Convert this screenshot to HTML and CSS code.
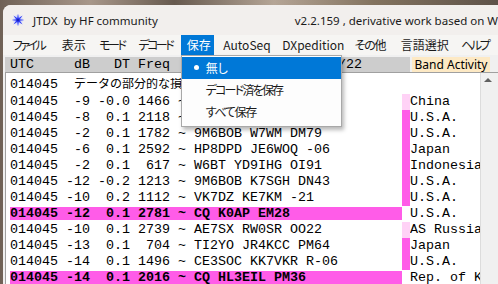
FILE: index.html
```html
<!doctype html>
<html lang="ja">
<head>
    <meta charset="UTF-8">
    <meta name="viewport" content="width=device-width, initial-scale=1.0">
    <link rel="stylesheet" href="styles.css">
    <title>JTDX</title>
</head>
<body>
<div class="window">
    <header class="titlebar">
        <svg class="app-icon" width="14" height="14" viewBox="0 0 14 14">
            <circle cx="7" cy="7" r="5" fill="#c8d0ff" opacity="0.6"/>
            <polygon fill="#2f3cf5" points="7,0.5 7.8,5.1 11.6,2.4 8.9,6.2 13.5,7 8.9,7.8 11.6,11.6 7.8,8.9 7,13.5 6.2,8.9 2.4,11.6 5.1,7.8 0.5,7 5.1,6.2 2.4,2.4 6.2,5.1"/>
            <circle cx="7" cy="7" r="1.3" fill="#1b22b8"/>
        </svg>
        <span class="app-name">JTDX  by HF community</span>
        <span class="app-version">v2.2.159 , derivative work based on WSJT-X by K1JT</span>
    </header>

    <nav class="menubar">
        <span class="menu kana">ファイル</span>
        <span class="menu">表示</span>
        <span class="menu kana">モード</span>
        <span class="menu kana">デコード</span>
        <span class="menu open">保存
            <ul class="dropdown">
                <li class="checked">無し</li>
                <li class="kana">デコード済を保存</li>
                <li class="tight">すべて保存</li>
            </ul>
        </span>
        <span class="menu">AutoSeq</span>
        <span class="menu">DXpedition</span>
        <span class="menu tight">その他</span>
        <span class="menu">言語選択</span>
        <span class="menu kana">ヘルプ</span>
    </nav>

    <section class="band">
        <div class="band-head">
            <div class="columns">UTC     dB   DT Freq    Message   2022/12/22</div>
            <div class="band-title">Band Activity</div>
        </div>
        <div class="band-body">
            <div class="lines">
                <div class="line first"><span class="msg">014045  <span class="note">データの部分的な損失を検出しました</span></span><span class="mark"></span><span class="country"></span></div>
                <div class="line"><span class="msg">014045  -9 -0.0 1466 ~ BD7MQB JA1ABC</span><span class="mark light"></span><span class="country">China</span></div>
                <div class="line"><span class="msg">014045  -8  0.1 2118 ~ W5ABC JH1XYZ</span><span class="mark"></span><span class="country">U.S.A.</span></div>
                <div class="line"><span class="msg">014045  -2  0.1 1782 ~ 9M6BOB W7WM DM79</span><span class="mark"></span><span class="country">U.S.A.</span></div>
                <div class="line"><span class="msg">014045  -6  0.1 2592 ~ HP8DPD JE6WOQ -06</span><span class="mark"></span><span class="country">Japan</span></div>
                <div class="line"><span class="msg">014045  -2  0.1  617 ~ W6BT YD9IHG OI91</span><span class="mark"></span><span class="country">Indonesia</span></div>
                <div class="line"><span class="msg">014045 -12 -0.2 1213 ~ 9M6BOB K7SGH DN43</span><span class="mark"></span><span class="country">U.S.A.</span></div>
                <div class="line"><span class="msg">014045 -10  0.2 1112 ~ VK7DZ KE7KM -21</span><span class="mark"></span><span class="country">U.S.A.</span></div>
                <div class="line cq"><span class="msg">014045 -12  0.1 2781 ~ CQ K0AP EM28</span><span class="mark"></span><span class="country">U.S.A.</span></div>
                <div class="line"><span class="msg">014045 -10  0.1 2739 ~ AE7SX RW0SR OO22</span><span class="mark light"></span><span class="country">AS Russia</span></div>
                <div class="line"><span class="msg">014045 -13  0.1  704 ~ TI2YO JR4KCC PM64</span><span class="mark"></span><span class="country">Japan</span></div>
                <div class="line"><span class="msg">014045 -14  0.1 1496 ~ CE3SOC KK7VKR R-06</span><span class="mark"></span><span class="country">U.S.A.</span></div>
                <div class="line cq"><span class="msg">014045 -14  0.1 2016 ~ CQ HL3EIL PM36</span><span class="mark"></span><span class="country">Rep. of Korea</span></div>
            </div>
            <div class="scrollbar"><span class="arrow-up"></span></div>
        </div>
    </section>
</div>
</body>
</html>
```

FILE: styles.css
```css
* {
    box-sizing: border-box;
}

html, body {
    width: 498px;
    height: 284px;
    margin: 0;
    overflow: hidden;
}

body {
    background: linear-gradient(90deg, #6f6156 0%, #a8978a 18%, #675a4f 35%, #b5a596 55%, #83735f 75%, #5e5249 100%);
    font-family: 'Noto Sans', 'Noto Sans CJK JP', sans-serif;
    color: #1a1a1a;
}

.window {
    margin: 5px 0 0 3px;
    height: 279px;
    background-color: #f0f0f0;
    border-top-left-radius: 8px;
    overflow: hidden;
}

/* title bar */

.titlebar {
    display: flex;
    align-items: center;
    height: 30px;
    padding-left: 8px;
    background-color: #f2efed;
    font-size: 11.5px;
    white-space: pre;
}

.app-icon {
    flex: none;
}

.app-name {
    margin-left: 8px;
}

.app-version {
    margin-left: 137px;
}

/* menu bar */

.menubar {
    display: grid;
    grid-template-columns: 46px 34.6px 36px 45.4px 33.6px 56px 69.4px 43px 57.6px auto;
    column-gap: 3px;
    height: 20px;
    padding-left: 3.7px;
    background-color: #f6f5f3;
    font-family: 'Noto Sans CJK JP', sans-serif;
    font-size: 12px;
    font-feature-settings: "palt";
    line-height: 20px;
    white-space: nowrap;
}

.menu {
    position: relative;
    padding: 0 6px;
}

.kana {
    letter-spacing: -2.5px;
}

.tight {
    letter-spacing: -1.3px;
}

.menu.open {
    background-color: #0078d7;
    color: #fff;
}

.dropdown {
    position: absolute;
    top: 20px;
    left: 0;
    z-index: 10;
    width: 161px;
    margin: 0;
    padding: 1px 0 3px;
    list-style: none;
    background-color: #fdfdfd;
    border: 1px solid #a8a8a8;
    box-shadow: 2px 3px 4px rgba(0, 0, 0, 0.28);
    color: #1a1a1a;
}

.dropdown li {
    position: relative;
    height: 22px;
    padding-left: 24px;
    line-height: 22px;
}

.dropdown li.kana {
    letter-spacing: -1.8px;
}

.dropdown li.checked {
    background-color: #0078d7;
    color: #fff;
}

.dropdown li.checked:before {
    content: "";
    position: absolute;
    left: 12px;
    top: 8px;
    width: 5px;
    height: 5px;
    border-radius: 50%;
    background-color: #fff;
}

/* band activity */

.band {
    padding: 2px 0 0 2px;
}

.band-head {
    display: flex;
    height: 15px;
    font-size: 12px;
    line-height: 15px;
}

.columns {
    width: 405px;
    padding-left: 5px;
    background-color: #cdcdcd;
    font-family: 'Liberation Mono', monospace;
    font-size: 13.33px;
    color: #000;
    white-space: pre;
    overflow: hidden;
}

.band-title {
    width: 78px;
    margin-left: 2px;
    background-color: #fde9c4;
    text-align: center;
    color: #000;
}

.band-body {
    display: flex;
    height: 220px;
    background-color: #fff;
    border-top: 1px solid #a0a0a0;
    border-left: 1px solid #a0a0a0;
}

.lines {
    flex: 1;
    min-width: 0;
    overflow: hidden;
    padding: 2px 0 0 4px;
    font-family: 'Liberation Mono', 'Noto Sans CJK JP', monospace;
    font-size: 13.33px;
    color: #000;
}

.line {
    display: flex;
    align-items: center;
    height: 16px;
}

.line.first {
    height: 18.5px;
}

.msg {
    flex: none;
    width: 392px;
    height: 13px;
    line-height: 13px;
    white-space: pre;
    overflow: hidden;
}

.note {
    font-size: 12px;
}

.mark {
    flex: none;
    align-self: stretch;
    width: 8px;
    background-color: #ff5ce8;
}

.mark.light {
    background-color: #ffd2f6;
}

.line.first .mark, .line.cq .mark {
    background-color: transparent;
}

.line.cq .msg {
    background-color: #ff5ce8;
    font-weight: bold;
}

.country {
    flex: 1;
    min-width: 0;
    white-space: pre;
    overflow: hidden;
}

.scrollbar {
    flex: none;
    position: relative;
    width: 18px;
    background-color: #f0f0f0;
    border-left: 1px solid #dcdcdc;
}

.arrow-up {
    position: absolute;
    top: 5px;
    left: 3px;
    width: 0;
    height: 0;
    border-left: 4px solid transparent;
    border-right: 4px solid transparent;
    border-bottom: 4px solid #606060;
}
```
